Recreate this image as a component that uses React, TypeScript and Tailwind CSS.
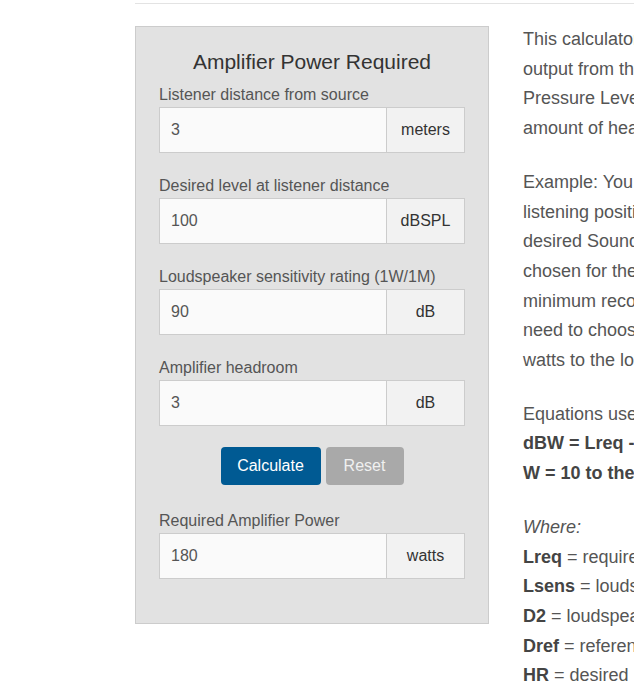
import React from 'react';

const fields = [
    { label: 'Listener distance from source', value: '3', unit: 'meters' },
    { label: 'Desired level at listener distance', value: '100', unit: 'dBSPL' },
    { label: 'Loudspeaker sensitivity rating (1W/1M)', value: '90', unit: 'dB' },
    { label: 'Amplifier headroom', value: '3', unit: 'dB' },
];

const Field: React.FC<{ label: string; value: string; unit: string; className?: string }> = ({ label, value, unit, className = '' }) => (
    <div className={className}>
        <label className="block text-[16px] leading-[21px] text-[#555] mb-[2px]">{label}</label>
        <div className="flex h-[46px] w-[306px]">
            <input
                readOnly
                value={value}
                className="flex-1 min-w-0 h-full bg-[#fafafa] border border-[#ccc] px-[11px] text-[16px] text-[#555] outline-none"
            />
            <span className="w-[78px] h-full flex items-center justify-center bg-[#f2f2f2] border border-l-0 border-[#ccc] text-[16px] text-[#333]">
                {unit}
            </span>
        </div>
    </div>
);

const Line: React.FC<{ children: React.ReactNode }> = ({ children }) => (
    <span className="block whitespace-nowrap">{children}</span>
);

const App: React.FC = () => {
    return (
        <div className="w-[634px] h-[688px] overflow-hidden bg-white font-['Liberation_Sans',Arial,sans-serif]">
            {/* top rule */}
            <div className="ml-[135px] mt-[3px] border-t border-[#e3e3e3]"></div>

            <div className="ml-[135px] pt-[22px] flex items-start gap-[34px]">
                {/* Calculator panel */}
                <div className="w-[354px] shrink-0 bg-[#e2e2e2] border border-[#ccc] px-[23px] pt-[23px] pb-[44px]">
                    <h3 className="text-[21px] leading-[24px] text-[#333] text-center">Amplifier Power Required</h3>

                    <Field {...fields[0]} className="mt-[10px]" />
                    {fields.slice(1).map((f) => (
                        <Field key={f.label} {...f} className="mt-[22px]" />
                    ))}

                    <div className="flex justify-center gap-[5px] mt-[21px]">
                        <button className="w-[100px] h-[38px] rounded-[4px] bg-[#005a93] text-white text-[16px]">Calculate</button>
                        <button className="w-[78px] h-[38px] rounded-[4px] bg-[#a9a9a9] text-[#f0f0f0] text-[16px]">Reset</button>
                    </div>

                    <Field label="Required Amplifier Power" value="180" unit="watts" className="mt-[25px]" />
                </div>

                {/* Description */}
                <div className="shrink-0 text-[18px] leading-[29.7px] text-[#555] -mt-[1px]">
                    <p className="mb-[24px]">
                        <Line>This calculator determines the amplifier power</Line>
                        <Line>output from the amplifier needed to reach a Sound</Line>
                        <Line>Pressure Level at the listener, with a given</Line>
                        <Line>amount of headroom.</Line>
                    </p>
                    <p className="mb-[24px]">
                        <Line>Example: You have a loudspeaker 3 meters from the</Line>
                        <Line>listening position. You want to achieve a</Line>
                        <Line>desired Sound Pressure Level of 100 dB. The speaker</Line>
                        <Line>chosen for the job has a sensitivity of 90 dB. The</Line>
                        <Line>minimum recommended headroom is 3 dB, so you</Line>
                        <Line>need to choose an amplifier capable of delivering 180</Line>
                        <Line>watts to the loudspeaker.</Line>
                    </p>
                    <p className="mb-[24px]">
                        <Line>Equations used:</Line>
                        <Line><b className="text-[#444]">dBW = Lreq - Lsens + 20log(D2/Dref) + HR</b></Line>
                        <Line><b className="text-[#444]">W = 10 to the power of (dBW/10)</b></Line>
                    </p>
                    <p>
                        <Line><i>Where:</i></Line>
                        <Line><b className="text-[#444]">Lreq</b> = required level at listener position</Line>
                        <Line><b className="text-[#444]">Lsens</b> = loudspeaker sensitivity</Line>
                        <Line><b className="text-[#444]">D2</b> = loudspeaker-to-listener distance</Line>
                        <Line><b className="text-[#444]">Dref</b> = reference distance</Line>
                        <Line><b className="text-[#444]">HR</b> = desired headroom</Line>
                    </p>
                </div>
            </div>
        </div>
    );
};

export default App;
